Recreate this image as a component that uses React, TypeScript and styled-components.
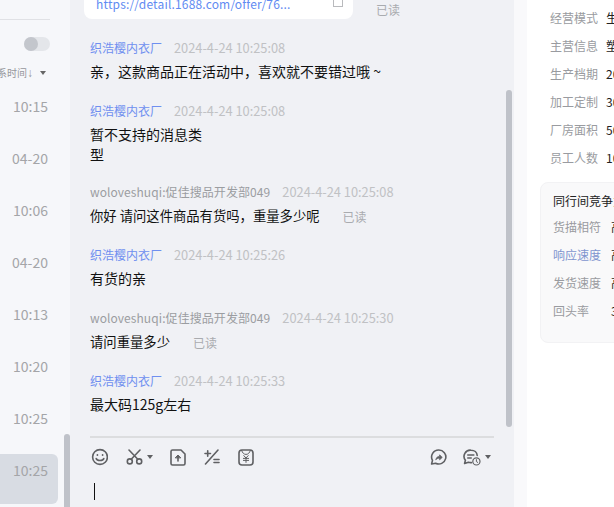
import React from "react";
import styled, { createGlobalStyle } from "styled-components";

const Global = createGlobalStyle`
  html, body { margin: 0; padding: 0; background: #fff; }
  body { font-family: "Noto Sans CJK SC", "Microsoft YaHei", sans-serif; }
`;

const Page = styled.div`
  width: 614px; height: 507px; overflow: hidden; display: flex;
  font-family: "Noto Sans CJK SC", sans-serif;
`;

/* left conversation list */
const ListPane = styled.aside`
  width: 70px; flex: none; height: 507px; background: #f6f7fa; display: flex; position: relative; overflow: hidden;
`;
const ListBody = styled.div`
  width: 64px; flex: none; display: flex; flex-direction: column; overflow: hidden;
`;
const ListRule = styled.div`
  width: 50px; height: 1px; background: #e0e1e5; margin-top: 19px; flex: none;
`;
const Toggle = styled.div`
  width: 26px; height: 14px; border-radius: 7px; background: #e4e6ea; margin: 17px 0 0 24px; flex: none; display: flex;
`;
const ToggleKnob = styled.div`
  width: 14px; height: 14px; border-radius: 50%; background: #c3c6cc;
`;
const SortLabel = styled.div`
  width: 46px; margin-top: 13px; height: 18px; flex: none; display: flex; justify-content: flex-end; align-items: center;
  font-size: 10px; line-height: 18px; color: #97989d; white-space: nowrap; overflow: hidden;
`;
const SortArrow = styled.span`
  width: 6px; flex: none; font-size: 12px; text-align: center; font-family: "Liberation Sans", sans-serif; margin-right: 7px;
`;
const Caret = styled.span<{ $color: string }>`
  width: 0; height: 0; flex: none; border-left: 3px solid transparent; border-right: 3px solid transparent;
  border-top: 4px solid ${p => p.$color}; margin-left: 4px;
`;
const SortCaret = styled(Caret)`
  margin-left: 0;
`;
const TimeList = styled.div`
  display: flex; flex-direction: column; gap: 2px; margin-top: 8px;
`;
const TimeRow = styled.div<{ $active?: boolean }>`
  width: 58px; height: 50px; box-sizing: border-box; padding: 6px 10px 0 0; flex: none;
  display: flex; justify-content: flex-end; align-items: flex-start;
  font-size: 14px; line-height: 20px; color: #a4a5a8;
  background: ${p => (p.$active ? "#d8dce3" : "transparent")};
  border-radius: ${p => (p.$active ? "0 6px 6px 0" : "0")};
`;
const ListScroll = styled.div`
  position: absolute; left: 64px; top: 434px; width: 6px; height: 73px; background: #bfc2c9; border-radius: 3px 3px 0 0;
`;

/* chat pane */
const ChatPane = styled.main`
  width: 444px; flex: none; height: 507px; background: #f0f1f5; display: flex; flex-direction: column; position: relative; overflow: hidden;
`;
const Log = styled.div`
  height: 436px; flex: none; box-sizing: border-box; padding-left: 20px; display: flex; flex-direction: column; overflow: hidden;
`;
const LinkRow = styled.div`
  display: flex; align-items: flex-end; flex: none; margin-left: -6px;
`;
const LinkCard = styled.div`
  width: 269px; height: 19px; background: #fff; border-radius: 0 0 8px 8px; box-sizing: border-box;
  padding: 0 10px 0 12px; display: flex; align-items: flex-end; justify-content: space-between; overflow: hidden; flex: none;
`;
const LinkText = styled.span`
  font-size: 12px; line-height: 18px; margin-bottom: 6px; color: #5f8bf2; letter-spacing: .17px; white-space: nowrap;
`;
const Read = styled.span`
  font-size: 12px; line-height: 18px; color: #a9abaf; flex: none; white-space: nowrap;
`;
const CardRead = styled(Read)`
  margin: 0 0 0 23px;
`;
const BodyRead = styled(Read)`
  margin-top: 2px;
`;
const Message = styled.div<{ $gap: number }>`
  margin-top: ${p => p.$gap}px; flex: none; display: flex; flex-direction: column;
`;
const Head = styled.div`
  display: flex; align-items: center; height: 18px; gap: 12px; white-space: nowrap;
`;
const Name = styled.span<{ $me?: boolean }>`
  font-size: 12px; line-height: 18px; color: ${p => (p.$me ? "#9b9da1" : "#6f8ff0")};
  letter-spacing: ${p => (p.$me ? "0.08px" : "0")};
`;
const Stamp = styled.span`
  font-size: 12.8px; line-height: 18px; color: #c0c1c4;
`;
const BodyRow = styled.div<{ $me?: boolean }>`
  display: flex; align-items: center; gap: 23px; margin-top: ${p => (p.$me ? 5 : 4)}px;
`;
const Body = styled.div<{ $me?: boolean }>`
  font-size: ${p => (p.$me ? "13.33px" : "14px")}; line-height: 20px; color: #111; white-space: pre-line;
`;
const LogScroll = styled.div`
  position: absolute; left: 436px; top: 90px; width: 6px; height: 337px; background: #bfc2c9; border-radius: 3px;
`;
const Rule = styled.div`
  height: 2px; margin: 0 20px; background: #dcdddf; flex: none;
`;
const Tools = styled.div`
  display: flex; align-items: center; height: 22px; margin: 8px 23px 0 20px; flex: none;
`;
const ToolGroup = styled.div`
  display: flex; align-items: center;
`;
const ToolBtn = styled.span<{ $w: number }>`
  width: ${p => p.$w}px; flex: none; display: flex; align-items: center;
  svg { flex: none; }
`;
const ToolSpacer = styled.div`
  flex: 1;
`;
const Editor = styled.div`
  margin: 15px 0 0 24px; width: 1px; height: 17px; background: #111; flex: none;
`;

/* right details */
const InfoPane = styled.section`
  flex: 1; min-width: 0; height: 507px; background: #fff; display: flex; overflow: hidden;
`;
const InfoGutter = styled.div`
  width: 13px; flex: none; background: #f9f9fb;
`;
const InfoBody = styled.div`
  width: 87px; flex: none; display: flex; flex-direction: column; padding-top: 4px; overflow: hidden;
`;
const InfoRow = styled.div`
  height: 28px; display: flex; align-items: center; padding-left: 23px; white-space: nowrap; flex: none;
  &:first-child { height: 27px; }
`;
const InfoLabel = styled.span<{ $w: number }>`
  width: ${p => p.$w}px; flex: none; font-size: 12px; color: #999ba0;
`;
const InfoValue = styled.span`
  font-size: 12px; color: #222;
`;
const Rival = styled.div`
  margin: 11px 0 0 13px; width: 100px; height: 161px; flex: none; background: #f9f9fa; border: 1px solid #f2f2f4; border-radius: 8px 0 0 8px; box-sizing: border-box;
  padding: 9px 0 0 12px; overflow: hidden;
`;
const RivalTitle = styled.div`
  font-size: 12px; line-height: 18px; height: 18px; margin-bottom: 2px; color: #222; white-space: nowrap;
`;
const RivalRow = styled.div`
  height: 28px; display: flex; align-items: center; white-space: nowrap;
`;
const RivalLabel = styled.span<{ $link?: boolean }>`
  width: 58px; flex: none; font-size: 12px; color: ${p => (p.$link ? "#7f95cf" : "#999ba0")};
`;

const stroke = { fill: "none", stroke: "#5f6063", strokeWidth: 1.6, strokeLinecap: "round" as const, strokeLinejoin: "round" as const };

const Smile = () => (
  <svg width="18" height="18" viewBox="0 0 18 18" {...stroke}>
    <circle cx="10" cy="9" r="7.4" />
    <path d="M6.2 10.6c1 2.6 6.6 2.6 7.6 0" />
    <circle cx="7.4" cy="7" r=".9" fill="#5f6063" stroke="none" />
    <circle cx="12.6" cy="7" r=".9" fill="#5f6063" stroke="none" />
  </svg>
);
const Scissors = () => (
  <svg width="17" height="16" viewBox="0 0 17 16" {...stroke}>
    <circle cx="3.8" cy="12.4" r="2.5" />
    <circle cx="13.2" cy="12.4" r="2.5" />
    <path d="M5.2 10.2 14 1M11.8 10.2 3 1" />
  </svg>
);
const Upload = () => (
  <svg width="16" height="17" viewBox="0 0 16 17" {...stroke}>
    <path d="M3 1h8l4 4v9.5a1.5 1.5 0 0 1-1.5 1.5h-11A1.5 1.5 0 0 1 1 14.5v-12A1.5 1.5 0 0 1 2.5 1z" />
    <path d="M8 12V7.5" />
    <path d="M5.5 8.6 8 6l2.5 2.6z" fill="#5f6063" strokeWidth="1" />
  </svg>
);
const PlusEq = () => (
  <svg width="16" height="16" viewBox="0 0 16 16" {...stroke}>
    <path d="M14 1 1.5 15" />
    <path d="M1 4.5h5.5M3.7 1.8v5.4" />
    <path d="M10 10.5h5M10 13.5h5" />
  </svg>
);
const Yuan = () => (
  <svg width="16" height="17" viewBox="0 0 16 17" {...stroke}>
    <rect x="1" y="1" width="14" height="15" rx="3" />
    <path d="M3.6 1.4c.8 2.6 2.4 4 4.4 4s3.6-1.4 4.4-4" strokeWidth="1" />
    <path d="M5.8 6.6 8 9l2.2-2.4M5.4 9.4h5.2M5.4 11.4h5.2M8 9v4.4" strokeWidth="1" />
  </svg>
);
const Share = () => (
  <svg width="17" height="16" viewBox="0 0 17 16" {...stroke}>
    <path d="M8.8 1a7 7 0 1 1-3.2 13.2L1.6 15l.9-3.6A7 7 0 0 1 8.8 1z" />
    <path d="M6 10.4c.3-2 1.5-3 3.6-3V5.8l2.6 2.6-2.6 2.4V9.2c-1.4 0-2.6.3-3.6 1.2z" fill="#5f6063" strokeWidth=".8" />
  </svg>
);
const History = () => (
  <svg width="18" height="17" viewBox="0 0 18 17" {...stroke}>
    <path d="M8.4 13.6a7 7 0 0 1-3-.4L1.6 14.4l.8-3.2A6.2 6.2 0 0 1 8 1.2c3.4 0 6 2.2 6.2 5.2" />
    <path d="M4.8 6h6M4.8 9h3.4" />
    <circle cx="13.4" cy="12.4" r="3.6" strokeWidth="1.2" />
    <path d="M13.4 10.6v2l1.3.8" strokeWidth="1" />
  </svg>
);
const Copy = styled.span`
  width: 10px; height: 7px; box-sizing: border-box; border: 1px solid #b9babd; border-top: 0; margin-bottom: 12px; flex: none;
`;

const times = ["10:15", "04-20", "10:06", "04-20", "10:13", "10:20", "10:25", "10:25"];
const SHOP = "织浩樱内衣厂";
const ME = "woloveshuqi:促佳搜品开发部049";
const messages = [
  { me: false, t: "2024-4-24 10:25:08", b: "亲，这款商品正在活动中，喜欢就不要错过哦 ~", g: 20 },
  { me: false, t: "2024-4-24 10:25:08", b: "暂不支持的消息类\n型", g: 21 },
  { me: true, t: "2024-4-24 10:25:08", b: "你好 请问这件商品有货吗，重量多少呢", read: true, g: 19 },
  { me: false, t: "2024-4-24 10:25:26", b: "有货的亲", g: 20 },
  { me: true, t: "2024-4-24 10:25:30", b: "请问重量多少", read: true, g: 21 },
  { me: false, t: "2024-4-24 10:25:33", b: "最大码125g左右", g: 20 },
];

export default function App() {
  return (
    <Page>
      <Global />
      <ListPane>
        <ListBody>
          <ListRule />
          <Toggle><ToggleKnob /></Toggle>
          <SortLabel>联系时间<SortArrow>↓</SortArrow><SortCaret $color="#666" /></SortLabel>
          <TimeList>
            {times.map((t, i) => <TimeRow key={i} $active={i === 7}>{t}</TimeRow>)}
          </TimeList>
        </ListBody>
        <ListScroll />
      </ListPane>
      <ChatPane>
        <Log>
          <LinkRow>
            <LinkCard>
              <LinkText>https://detail.1688.com/offer/76...</LinkText>
              <Copy />
            </LinkCard>
            <CardRead>已读</CardRead>
          </LinkRow>
          {messages.map((m, i) => (
            <Message key={i} $gap={m.g}>
              <Head>
                <Name $me={m.me}>{m.me ? ME : SHOP}</Name>
                <Stamp>{m.t}</Stamp>
              </Head>
              <BodyRow $me={m.me}>
                <Body $me={m.me}>{m.b}</Body>
                {m.read && <BodyRead>已读</BodyRead>}
              </BodyRow>
            </Message>
          ))}
        </Log>
        <Rule />
        <Tools>
          <ToolGroup>
            <ToolBtn $w={36}><Smile /></ToolBtn>
            <ToolBtn $w={44}><Scissors /><Caret $color="#5f6063" /></ToolBtn>
            <ToolBtn $w={34}><Upload /></ToolBtn>
            <ToolBtn $w={34}><PlusEq /></ToolBtn>
            <ToolBtn $w={18}><Yuan /></ToolBtn>
          </ToolGroup>
          <ToolSpacer />
          <ToolGroup>
            <ToolBtn $w={33}><Share /></ToolBtn>
            <ToolBtn $w={28}><History /><Caret $color="#5f6063" /></ToolBtn>
          </ToolGroup>
        </Tools>
        <Editor />
        <LogScroll />
      </ChatPane>
      <InfoPane>
        <InfoGutter />
        <InfoBody>
          {[["经营模式", "生产加工"], ["主营信息", "塑身内衣"], ["生产档期", "20天"], ["加工定制", "30天"], ["厂房面积", "500"], ["员工人数", "100"]].map(([l, v]) => (
            <InfoRow key={l}>
              <InfoLabel $w={56}>{l}</InfoLabel>
              <InfoValue>{v}</InfoValue>
            </InfoRow>
          ))}
          <Rival>
            <RivalTitle>同行间竞争力</RivalTitle>
            {[["货描相符", "高"], ["响应速度", "高"], ["发货速度", "高"], ["回头率", "3"]].map(([l, v], i) => (
              <RivalRow key={l}>
                <RivalLabel $link={i === 1}>{l}</RivalLabel>
                <InfoValue>{v}</InfoValue>
              </RivalRow>
            ))}
          </Rival>
        </InfoBody>
      </InfoPane>
    </Page>
  );
}
